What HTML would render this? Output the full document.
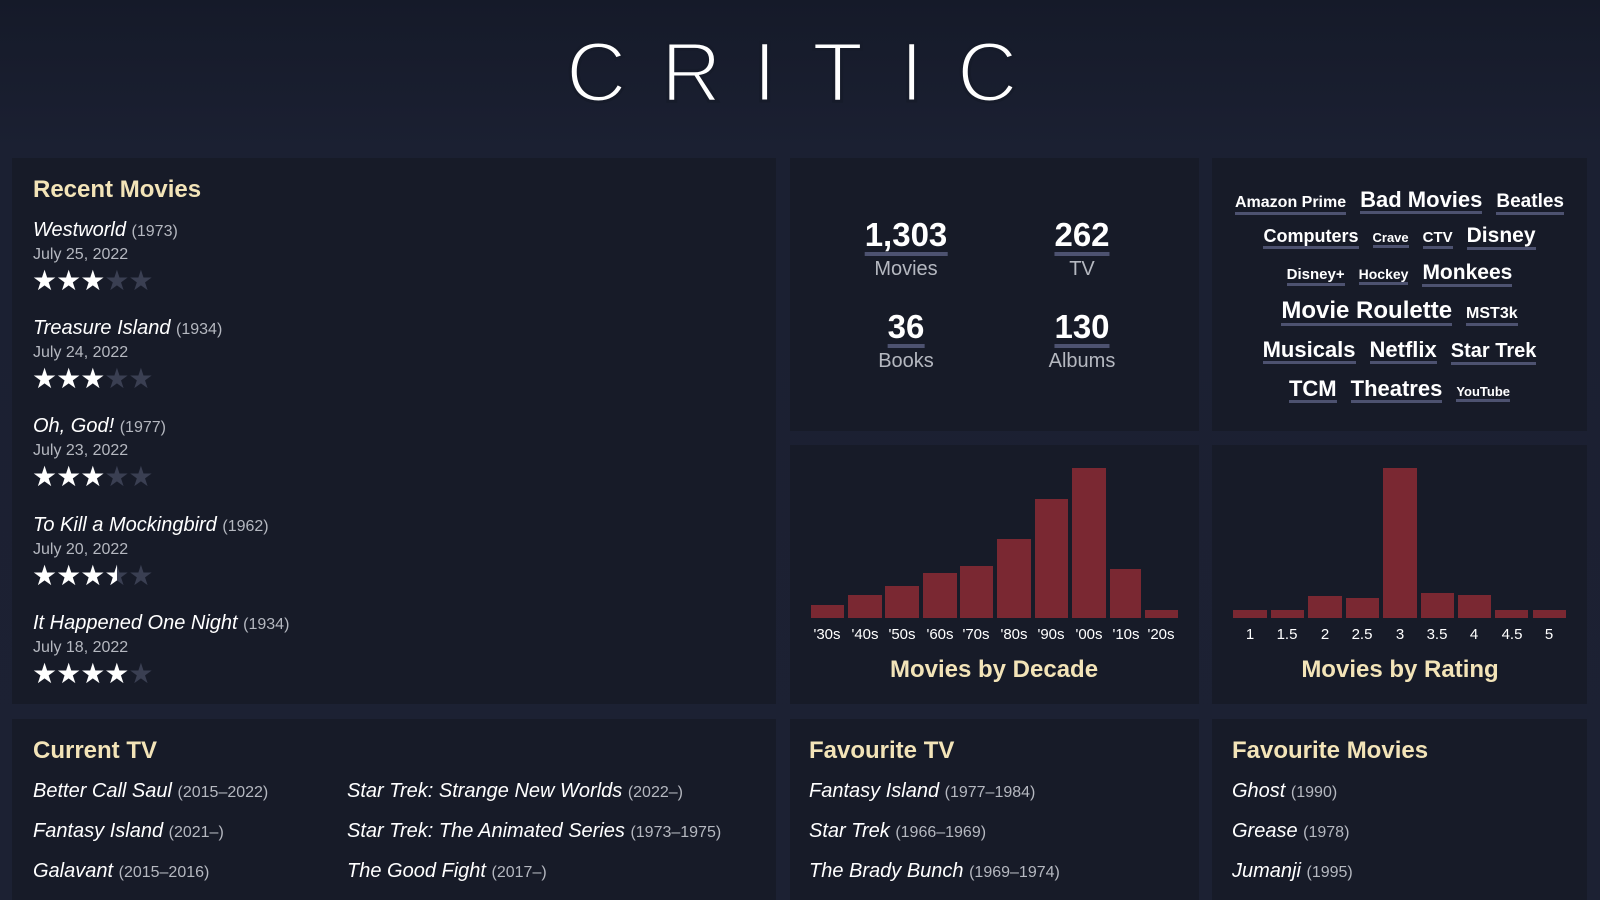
<!DOCTYPE html>
<html><head><meta charset="utf-8"><style>
*{margin:0;padding:0;box-sizing:border-box}
body{width:1600px;height:900px;background:linear-gradient(#151a29 0px,#1b2032 150px,#1c2133 900px);font-family:"Liberation Sans",sans-serif;color:#fff;position:relative;overflow:hidden}
.p{position:absolute;background:#171b28}
.a{position:absolute;white-space:nowrap}
.h{font-weight:bold;color:#f3e4b8;font-size:24px}
.t{font-style:italic;font-size:20px;color:#fff}
.y{font-style:normal;font-size:16px;color:#b5b8c0}
.d{font-size:16px;color:#b5b8c0}
.st{font-size:28px;letter-spacing:-1px;line-height:1}
.st b{color:#3a3f52;font-weight:normal}
.n{font-weight:bold;font-size:33px;border-bottom:4px solid #4d5270;line-height:34px}
.l{font-size:20px;color:#b5b8c0}
.c{transform:translateX(-50%);text-align:center}
.tags{position:absolute;left:1212px;width:375px;text-align:center;font-weight:bold}
.tags span{display:inline-block;border-bottom:3px solid #4d5270;margin:0 7px;line-height:1.05;vertical-align:baseline}
.bar{position:absolute;background:#7a2832}
.xl{position:absolute;top:626px;font-size:15px;transform:translateX(-50%)}
.title{position:absolute;top:30px;font-size:84px;line-height:1;color:#fff;-webkit-text-stroke:3px #161b2a;paint-order:normal}
</style></head><body>
<div class="title" style="left:566px">C</div>
<div class="title" style="left:661px">R</div>
<div class="title" style="left:753px">I</div>
<div class="title" style="left:812px">T</div>
<div class="title" style="left:900px">I</div>
<div class="title" style="left:957px">C</div>

<div class="p" style="left:12px;top:158px;width:764px;height:546px"></div>
<div class="p" style="left:790px;top:158px;width:409px;height:273px"></div>
<div class="p" style="left:1212px;top:158px;width:375px;height:273px"></div>
<div class="p" style="left:790px;top:445px;width:409px;height:259px"></div>
<div class="p" style="left:1212px;top:445px;width:375px;height:259px"></div>
<div class="p" style="left:12px;top:719px;width:764px;height:181px"></div>
<div class="p" style="left:790px;top:719px;width:409px;height:181px"></div>
<div class="p" style="left:1212px;top:719px;width:375px;height:181px"></div>

<div class="a h" style="left:33px;top:176px">Recent Movies</div>
<div class="a t" style="left:33px;top:219px">Westworld <span class="y">(1973)</span></div>
<div class="a d" style="left:33px;top:246px">July 25, 2022</div>
<div class="a st" style="left:32px;top:267px">★★★<b>★★</b></div>
<div class="a t" style="left:33px;top:317px">Treasure Island <span class="y">(1934)</span></div>
<div class="a d" style="left:33px;top:344px">July 24, 2022</div>
<div class="a st" style="left:32px;top:365px">★★★<b>★★</b></div>
<div class="a t" style="left:33px;top:415px">Oh, God! <span class="y">(1977)</span></div>
<div class="a d" style="left:33px;top:442px">July 23, 2022</div>
<div class="a st" style="left:32px;top:463px">★★★<b>★★</b></div>
<div class="a t" style="left:33px;top:514px">To Kill a Mockingbird <span class="y">(1962)</span></div>
<div class="a d" style="left:33px;top:541px">July 20, 2022</div>
<div class="a st" style="left:32px;top:562px">★★★<span style="position:relative;display:inline-block"><b>★</b><span style="position:absolute;left:0;top:0;width:13px;overflow:hidden">★</span></span><b>★</b></div>
<div class="a t" style="left:33px;top:612px">It Happened One Night <span class="y">(1934)</span></div>
<div class="a d" style="left:33px;top:639px">July 18, 2022</div>
<div class="a st" style="left:32px;top:660px">★★★★<b>★</b></div>

<div class="a n c" style="left:906px;top:218px">1,303</div>
<div class="a l c" style="left:906px;top:258px">Movies</div>
<div class="a n c" style="left:1082px;top:218px">262</div>
<div class="a l c" style="left:1082px;top:258px">TV</div>
<div class="a n c" style="left:906px;top:310px">36</div>
<div class="a l c" style="left:906px;top:350px">Books</div>
<div class="a n c" style="left:1082px;top:310px">130</div>
<div class="a l c" style="left:1082px;top:350px">Albums</div>

<div class="tags" style="top:188px"><span style="font-size:16px">Amazon Prime</span><span style="font-size:22px">Bad Movies</span><span style="font-size:19px">Beatles</span></div>
<div class="tags" style="top:225px"><span style="font-size:18px">Computers</span><span style="font-size:13px">Crave</span><span style="font-size:15px">CTV</span><span style="font-size:21px">Disney</span></div>
<div class="tags" style="top:262px"><span style="font-size:15px">Disney+</span><span style="font-size:14px">Hockey</span><span style="font-size:21px">Monkees</span></div>
<div class="tags" style="top:298px"><span style="font-size:24px">Movie Roulette</span><span style="font-size:16px">MST3k</span></div>
<div class="tags" style="top:338px"><span style="font-size:22px">Musicals</span><span style="font-size:22px">Netflix</span><span style="font-size:20px">Star Trek</span></div>
<div class="tags" style="top:377px"><span style="font-size:22px">TCM</span><span style="font-size:22px">Theatres</span><span style="font-size:13px">YouTube</span></div>

<div class="bar" style="left:811px;top:605px;width:33px;height:13px"></div>
<div class="bar" style="left:848px;top:595px;width:34px;height:23px"></div>
<div class="bar" style="left:885px;top:586px;width:34px;height:32px"></div>
<div class="bar" style="left:923px;top:573px;width:34px;height:45px"></div>
<div class="bar" style="left:960px;top:566px;width:33px;height:52px"></div>
<div class="bar" style="left:997px;top:539px;width:34px;height:79px"></div>
<div class="bar" style="left:1035px;top:499px;width:33px;height:119px"></div>
<div class="bar" style="left:1072px;top:468px;width:34px;height:150px"></div>
<div class="bar" style="left:1110px;top:569px;width:31px;height:49px"></div>
<div class="bar" style="left:1145px;top:610px;width:33px;height:8px"></div>
<div class="xl" style="left:827px">'30s</div><div class="xl" style="left:865px">'40s</div><div class="xl" style="left:902px">'50s</div><div class="xl" style="left:940px">'60s</div><div class="xl" style="left:976px">'70s</div><div class="xl" style="left:1014px">'80s</div><div class="xl" style="left:1051px">'90s</div><div class="xl" style="left:1089px">'00s</div><div class="xl" style="left:1126px">'10s</div><div class="xl" style="left:1161px">'20s</div>
<div class="a h c" style="left:994px;top:656px">Movies by Decade</div>

<div class="bar" style="left:1233px;top:610px;width:34px;height:8px"></div>
<div class="bar" style="left:1271px;top:610px;width:33px;height:8px"></div>
<div class="bar" style="left:1308px;top:596px;width:34px;height:22px"></div>
<div class="bar" style="left:1346px;top:598px;width:33px;height:20px"></div>
<div class="bar" style="left:1383px;top:468px;width:34px;height:150px"></div>
<div class="bar" style="left:1421px;top:593px;width:33px;height:25px"></div>
<div class="bar" style="left:1458px;top:595px;width:33px;height:23px"></div>
<div class="bar" style="left:1495px;top:610px;width:33px;height:8px"></div>
<div class="bar" style="left:1533px;top:610px;width:33px;height:8px"></div>
<div class="xl" style="left:1250px">1</div><div class="xl" style="left:1287px">1.5</div><div class="xl" style="left:1325px">2</div><div class="xl" style="left:1362px">2.5</div><div class="xl" style="left:1400px">3</div><div class="xl" style="left:1437px">3.5</div><div class="xl" style="left:1474px">4</div><div class="xl" style="left:1512px">4.5</div><div class="xl" style="left:1549px">5</div>
<div class="a h c" style="left:1400px;top:656px">Movies by Rating</div>

<div class="a h" style="left:33px;top:737px">Current TV</div>
<div class="a t" style="left:33px;top:780px">Better Call Saul <span class="y">(2015–2022)</span></div>
<div class="a t" style="left:33px;top:820px">Fantasy Island <span class="y">(2021–)</span></div>
<div class="a t" style="left:33px;top:860px">Galavant <span class="y">(2015–2016)</span></div>
<div class="a t" style="left:347px;top:780px">Star Trek: Strange New Worlds <span class="y">(2022–)</span></div>
<div class="a t" style="left:347px;top:820px">Star Trek: The Animated Series <span class="y">(1973–1975)</span></div>
<div class="a t" style="left:347px;top:860px">The Good Fight <span class="y">(2017–)</span></div>

<div class="a h" style="left:809px;top:737px">Favourite TV</div>
<div class="a t" style="left:809px;top:780px">Fantasy Island <span class="y">(1977–1984)</span></div>
<div class="a t" style="left:809px;top:820px">Star Trek <span class="y">(1966–1969)</span></div>
<div class="a t" style="left:809px;top:860px">The Brady Bunch <span class="y">(1969–1974)</span></div>

<div class="a h" style="left:1232px;top:737px">Favourite Movies</div>
<div class="a t" style="left:1232px;top:780px">Ghost <span class="y">(1990)</span></div>
<div class="a t" style="left:1232px;top:820px">Grease <span class="y">(1978)</span></div>
<div class="a t" style="left:1232px;top:860px">Jumanji <span class="y">(1995)</span></div>
</body></html>
